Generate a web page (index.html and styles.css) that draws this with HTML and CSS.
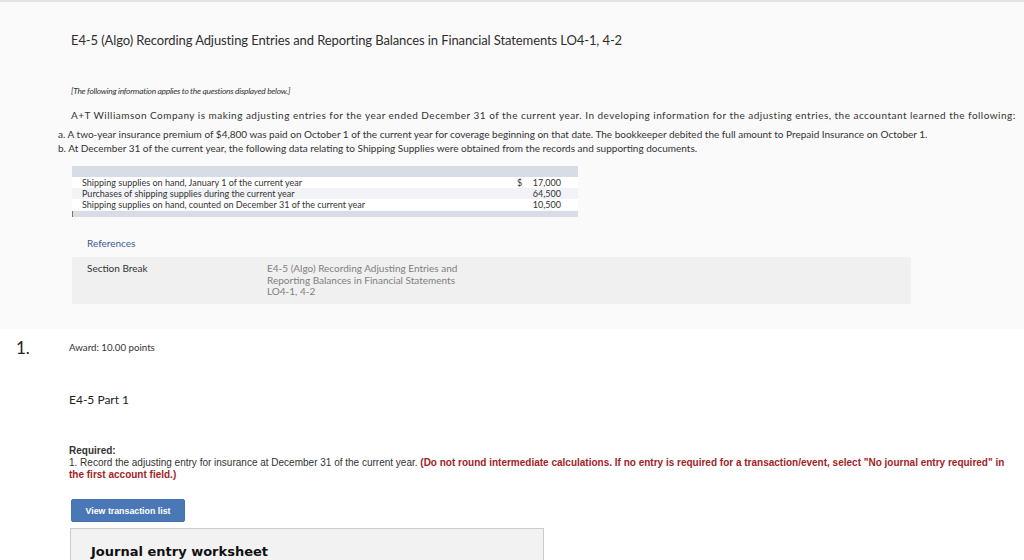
FILE: index.html
```html
<!DOCTYPE html>
<html>
<head>
<meta charset="utf-8">
<link rel="stylesheet" href="styles.css">
</head>
<body>
<div class="topline"></div>
<section class="intro">
  <h1 class="title">E4-5 (Algo) Recording Adjusting Entries and Reporting Balances in Financial Statements LO4-1, 4-2</h1>
  <p class="note">[The following information applies to the questions displayed below.]</p>
  <p class="para">A+T Williamson Company is making adjusting entries for the year ended December 31 of the current year. In developing information for the adjusting entries, the accountant learned the following:</p>
  <div class="items">
    <p>a. A two-year insurance premium of $4,800 was paid on October 1 of the current year for coverage beginning on that date. The bookkeeper debited the full amount to Prepaid Insurance on October 1.</p>
    <p>b. At December 31 of the current year, the following data relating to Shipping Supplies were obtained from the records and supporting documents.</p>
  </div>
  <div class="table">
    <div class="thead"></div>
    <div class="row"><span class="label">Shipping supplies on hand, January 1 of the current year</span><span class="dollar">$</span><span class="num">17,000</span></div>
    <div class="row alt"><span class="label">Purchases of shipping supplies during the current year</span><span class="dollar"></span><span class="num">64,500</span></div>
    <div class="row"><span class="label">Shipping supplies on hand, counted on December 31 of the current year</span><span class="dollar"></span><span class="num">10,500</span></div>
    <div class="tfoot"></div>
  </div>
  <div class="refs">References</div>
  <div class="refbox">
    <div class="refname">Section Break</div>
    <div class="refdesc">E4-5 (Algo) Recording Adjusting Entries and<br>Reporting Balances in Financial Statements<br>LO4-1, 4-2</div>
  </div>
</section>
<section class="question">
  <div class="qhead">
    <div class="qnum">1.</div>
    <div class="award">Award: 10.00 points</div>
  </div>
  <div class="qbody">
    <h2 class="part">E4-5 Part 1</h2>
    <div class="required">
      <div class="req-label">Required:</div>
      <div class="req-line">1. Record the adjusting entry for insurance at December 31 of the current year. <span class="red">(Do not round intermediate calculations. If no entry is required for a transaction/event, select "No journal entry required" in</span></div>
      <div class="red">the first account field.)</div>
    </div>
    <button class="btn">View transaction list</button>
    <div class="journal">
      <div class="jtitle">Journal entry worksheet</div>
    </div>
  </div>
</section>
</body>
</html>
```
FILE: styles.css
```css
html, body {
  margin: 0;
  padding: 0;
  background: #ffffff;
  overflow: hidden;
  height: 560px;
}
body {
  font-family: "Lato", "Liberation Sans", sans-serif;
  color: #333333;
}
.topline {
  height: 2px;
  background: #e2e2e2;
}
.intro {
  background: #fafafa;
  height: 327px;
  padding: 0 0 0 71px;
  box-sizing: border-box;
  overflow: hidden;
}
.title {
  margin: 0;
  padding-top: 29px;
  font-size: 13px;
  line-height: 18px;
  font-weight: 400;
  letter-spacing: -0.1px;
  color: #2f2f2f;
}
.note {
  margin: 35px 0 0 0;
  font-size: 8.4px;
  line-height: 14px;
  letter-spacing: -0.25px;
  font-style: italic;
  color: #333;
}
.para {
  margin: 10px 0 0 0;
  font-size: 10px;
  line-height: 14px;
  letter-spacing: 0.48px;
  color: #333;
  white-space: nowrap;
}
.items {
  margin: 5px 0 0 -13px;
  font-size: 10px;
  line-height: 14px;
}
.items p {
  margin: 0;
  white-space: nowrap;
}
.table {
  margin: 11px 0 0 1px;
  width: 506px;
  font-size: 9px;
}
.thead {
  height: 11px;
  background: #d7dce5;
}
.row {
  display: flex;
  height: 11px;
  line-height: 11px;
  background: #ffffff;
  padding: 0 17px 0 10px;
}
.row.alt {
  background: #f2f3f6;
}
.label {
  flex: 1;
}
.dollar {
  width: 12px;
}
.num {
  width: 32px;
  text-align: right;
}
.tfoot {
  height: 6px;
  background: #d7dce5;
  border-left: 1px solid #777;
  margin-top: 1px;
}
.refs {
  margin: 19px 0 0 16px;
  font-size: 10px;
  line-height: 14px;
  color: #3b5b96;
}
.refbox {
  margin: 7px 0 0 1px;
  width: 839px;
  height: 47px;
  background: #f0f0f0;
  border-radius: 2px;
  display: flex;
  padding: 6px 0 0 15px;
  box-sizing: border-box;
}
.refname {
  width: 180px;
  font-size: 10px;
  line-height: 11.5px;
  color: #333;
}
.refdesc {
  font-size: 10px;
  line-height: 11.5px;
  color: #7f7f7f;
}
.qhead {
  display: flex;
  align-items: center;
  height: 36px;
}
.qnum {
  width: 69px;
  padding-left: 16px;
  box-sizing: border-box;
  font-size: 17px;
  color: #222;
}
.award {
  font-size: 9.7px;
  color: #333;
}
.qbody {
  padding-left: 69px;
}
.part {
  margin: 27px 0 0 0;
  font-size: 12px;
  line-height: 16px;
  font-weight: 400;
  color: #222;
}
.required {
  margin-top: 37px;
  font-family: "Liberation Sans", Arial, sans-serif;
  font-size: 10px;
  line-height: 12px;
  color: #333;
}
.req-line {
  white-space: nowrap;
}
.req-label {
  font-weight: 700;
}
.red {
  color: #a3231f;
  font-weight: 700;
}
.btn {
  display: block;
  margin: 18px 0 0 2px;
  width: 114px;
  height: 23px;
  border: 1px solid #4572ad;
  border-radius: 2px;
  background: #4a77b6;
  color: #ffffff;
  font-family: "Liberation Sans", Arial, sans-serif;
  font-weight: 700;
  font-size: 8.8px;
  padding: 0;
}
.journal {
  margin: 6px 0 0 1px;
  width: 474px;
  height: 60px;
  background: #f2f2f2;
  border: 1px solid #cccccc;
  box-sizing: border-box;
  padding: 15px 0 0 20px;
}
.jtitle {
  font-family: "DejaVu Sans", Verdana, sans-serif;
  font-weight: 700;
  font-size: 13px;
  line-height: 16px;
  color: #111;
}
```
